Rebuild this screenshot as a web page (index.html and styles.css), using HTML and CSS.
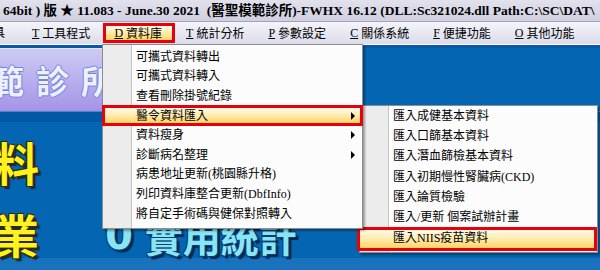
FILE: index.html
```html
<!DOCTYPE html>
<html lang="zh-Hant">
<head>
    <meta charset="UTF-8">
    <meta name="viewport" content="width=device-width, initial-scale=1.0">
    <title>醫聖模範診所 - FWHX</title>
    <link rel="stylesheet" href="styles.css">
</head>
<body>
    <div class="screen">
        <div class="titlebar">64bit ) 版 ★ 11.083 - June.30 2021&nbsp; (醫聖模範診所)-FWHX 16.12 (DLL:Sc321024.dll Path:C:\SC\DAT\</div>

        <div class="menubar">
            <span class="menu-cut">具</span>
            <span class="menu-item"><u>T</u>&nbsp;工具程式</span>
            <span class="menu-item active"><u>D</u>&nbsp;資料庫</span>
            <span class="menu-item"><u>T</u>&nbsp;統計分析</span>
            <span class="menu-item"><u>P</u>&nbsp;參數設定</span>
            <span class="menu-item"><u>C</u>&nbsp;關係系統</span>
            <span class="menu-item"><u>F</u>&nbsp;便捷功能</span>
            <span class="menu-item"><u>O</u>&nbsp;其他功能</span>
        </div>

        <div class="desk">
            <div class="banner"><span class="banner-text">範診所</span></div>
            <div class="band"></div>
            <div class="art">
                <div class="big-yellow">料</div>
                <div class="art-row">
                    <div class="big-yellow">業</div>
                    <div class="big-cyan"><span class="ring">0</span>實用統計</div>
                </div>
            </div>
        </div>

        <!-- 資料庫 dropdown -->
        <ul class="menu main-menu">
            <li class="menu-row">可攜式資料轉出</li>
            <li class="menu-row">可攜式資料轉入</li>
            <li class="menu-row">查看刪除掛號紀錄</li>
            <li class="menu-row hot"><span class="label">醫令資料匯入</span><span class="arrow"></span></li>
            <li class="menu-row"><span class="label">資料瘦身</span><span class="arrow"></span></li>
            <li class="menu-row"><span class="label">診斷病名整理</span><span class="arrow"></span></li>
            <li class="menu-row">病患地址更新(桃園縣升格)</li>
            <li class="menu-row">列印資料庫整合更新(DbfInfo)</li>
            <li class="menu-row">將自定手術碼與健保對照轉入</li>
        </ul>

        <!-- 醫令資料匯入 submenu -->
        <ul class="menu sub-menu">
            <li class="menu-row">匯入成健基本資料</li>
            <li class="menu-row">匯入口篩基本資料</li>
            <li class="menu-row">匯入潛血篩檢基本資料</li>
            <li class="menu-row">匯入初期慢性腎臟病(CKD)</li>
            <li class="menu-row">匯入論質檢驗</li>
            <li class="menu-row">匯入/更新&nbsp;個案試辦計畫</li>
            <li class="menu-row hot">匯入NIIS疫苗資料</li>
        </ul>
    </div>
</body>
</html>
```

FILE: styles.css
```css
* {
    box-sizing: border-box;
}

body {
    margin: 0;
    font-family: "Liberation Serif", "Noto Sans CJK TC", serif;
    color: #000;
}

.screen {
    position: relative;
    width: 600px;
    height: 270px;
    overflow: hidden;
    background: #0466b2;
}

/* title bar */
.titlebar {
    height: 22px;
    padding-left: 3px;
    border-bottom: 1px solid #a2a2b8;
    background: linear-gradient(#e2e2ed, #cfcfe0);
    font-size: 13.5px;
    font-weight: 700;
    line-height: 21px;
    white-space: nowrap;
    overflow: hidden;
}

/* menu bar */
.menubar {
    display: flex;
    height: 23px;
    padding-top: 1px;
    border-bottom: 1px solid #fff;
    background: linear-gradient(#f4f4fa, #dcdcea);
    font-size: 12px;
    white-space: nowrap;
    overflow: hidden;
}

.menu-cut {
    margin: 3px 16px 0 -7px;
    line-height: 14px;
}

.menu-item {
    display: flex;
    align-items: center;
    height: 20px;
    padding: 0 10px 0 8px;
    border: 3px solid transparent;
}

.menu-item.active {
    border-color: #e8000a;
    background: linear-gradient(#fffbe8, #ffe9a6 55%, #ffd463);
}

/* desktop art */
.desk {
    display: flex;
    flex-direction: column;
    height: 225px;
    border-top: 3px solid #0959a6;
}

.banner {
    display: flex;
    align-items: center;
    width: 330px;
    height: 63px;
    border-top: 1px solid #e4e2fa;
    background: linear-gradient(#cdcbf3, #a593e9);
    overflow: hidden;
}

.banner-text {
    margin-left: -9px;
    font-family: "Noto Sans CJK TC", sans-serif;
    font-size: 33px;
    font-weight: 700;
    line-height: 33px;
    letter-spacing: 12px;
    color: #eef0ff;
    text-shadow: -1px 0 #7284dc, 1px 0 #7284dc, 0 -1px #7284dc, 0 1px #7284dc;
}

.band {
    height: 11px;
    border-top: 1px solid #4a86c8;
    background: #0057a3;
}

.art {
    flex: 1;
    padding-top: 16px;
    background: linear-gradient(transparent 136px, rgba(120, 170, 230, 0.18) 136px);
}

.art-row {
    display: flex;
    align-items: flex-end;
    margin-top: 26px;
}

.big-yellow {
    margin-left: -7px;
    font-family: "Noto Sans CJK TC", sans-serif;
    font-size: 46px;
    font-weight: 700;
    line-height: 46px;
    color: #fff21e;
    text-shadow: -1px -1px 0 #2e2a06, 1px -1px 0 #2e2a06, -1px 1px 0 #2e2a06, 1px 1px 0 #2e2a06,
        3px 3px 1px #1d2a36;
}

.big-cyan {
    display: flex;
    align-items: flex-end;
    margin-left: 66px;
    margin-bottom: 1px;
    font-family: "Noto Sans CJK TC", sans-serif;
    font-size: 38px;
    font-weight: 700;
    line-height: 38px;
    color: #88e6f2;
    text-shadow: -1px -1px 0 #0c3c78, 1px -1px 0 #0c3c78, -1px 1px 0 #0c3c78, 1px 1px 0 #0c3c78,
        3px 3px 1px #06284e;
}

.ring {
    margin-right: 12px;
    margin-bottom: 2px;
    font-family: "DejaVu Sans", sans-serif;
    font-size: 40px;
    line-height: 36px;
}

/* dropdown menus */
.menu {
    position: absolute;
    margin: 0;
    list-style: none;
    border: 1px solid #8c8c8c;
    background: linear-gradient(to right, #ececec 28px, #c4c4c4 28px, #c4c4c4 29px, #fff 29px, #fff 30px, #fcfcfc 30px);
    box-shadow: 2px 2px 2px rgba(0, 0, 0, 0.35);
    font-size: 12px;
    white-space: nowrap;
}

.main-menu {
    z-index: 3;
    top: 44px;
    left: 102px;
    width: 261px;
    padding: 2px 0 5px;
}

.sub-menu {
    z-index: 2;
    top: 105px;
    left: 359px;
    width: 239px;
    padding: 0 0 1px;
}

.menu-row {
    display: flex;
    align-items: center;
    height: 19.6px;
    padding-left: 33px;
    line-height: 14px;
}

.sub-menu .menu-row {
    height: 20.2px;
}

.label {
    flex: 1;
}

.arrow {
    width: 0;
    height: 0;
    margin-right: 7px;
    border-left: 4px solid #000;
    border-top: 4px solid transparent;
    border-bottom: 4px solid transparent;
}

.menu-row.hot {
    border: 3px solid #e8000a;
    background: linear-gradient(#fffbe8, #ffe9a6 55%, #ffd463);
}

.main-menu .hot {
    height: 20.6px;
    margin: -0.5px -1px;
    padding-left: 31px;
}

.main-menu .hot .arrow {
    margin-right: 5px;
}

.sub-menu .menu-row.hot {
    height: 23.5px;
    margin-left: -3px;
    padding-left: 33px;
    padding-bottom: 2px;
}
```
